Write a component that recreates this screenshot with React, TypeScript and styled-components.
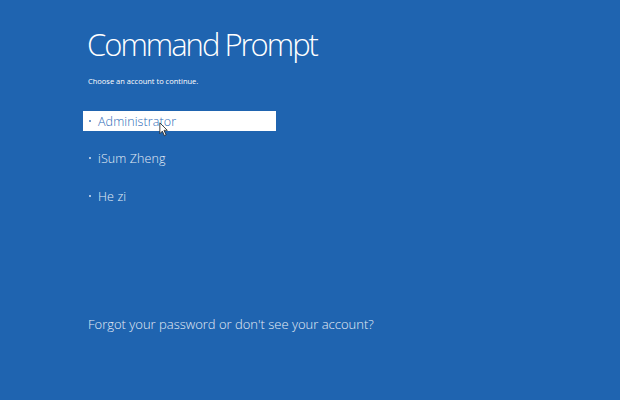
import React from 'react';
import styled, { createGlobalStyle } from 'styled-components';

const GlobalStyle = createGlobalStyle`
	html, body {
		margin: 0;
		padding: 0;
		background: #1f64b0;
	}
	body {
		font-family: "Open Sans", "Liberation Sans", sans-serif;
	}
`;

const accounts = ['Administrator', 'iSum Zheng', 'He zi'];

const App: React.FC = () => {
	return (
		<Main>
			<GlobalStyle />
			<Title>Command Prompt</Title>
			<Subtitle>Choose an account to continue.</Subtitle>
			<AccountList>
				{accounts.map((name, i) => (
					<Account key={name} selected={i === 0}>
						<Bullet selected={i === 0} />
						{name}
						{i === 0 && (
							<Cursor viewBox="0 0 12 18" width="10" height="15">
								<path d="M1 1 L1 14 L4 11 L6.5 16.5 L8.5 15.5 L6 10 L10 10 Z" fill="#fff" stroke="#222" strokeWidth="1" />
							</Cursor>
						)}
					</Account>
				))}
			</AccountList>
			<Forgot>Forgot your password or don't see your account?</Forgot>
		</Main>
	);
};

export default App;

const Main = styled.div`
	width: 620px;
	height: 400px;
	box-sizing: border-box;
	padding: 24px 0 0 83px;
	background: #1f64b0;
	color: #fff;
	display: flex;
	flex-direction: column;
`;

const Title = styled.h1`
	margin: 0 0 0 4px;
	font-size: 31px;
	font-weight: 300;
	line-height: 40px;
	letter-spacing: -2px;
`;

const Subtitle = styled.div`
	margin: 12px 0 0 5px;
	font-size: 7.5px;
	line-height: 10px;
`;

const AccountList = styled.div`
	display: flex;
	flex-direction: column;
	gap: 17.5px;
	margin-top: 25px;
`;

const Account = styled.div<{ selected: boolean }>`
	position: relative;
	width: 193px;
	height: 20px;
	display: flex;
	align-items: center;
	padding-left: 6px;
	box-sizing: border-box;
	font-size: 12.5px;
	font-weight: 300;
	letter-spacing: 0.1px;
	background: ${p => (p.selected ? '#fff' : 'transparent')};
	color: ${p => (p.selected ? '#2d6bb7' : '#e4ecf6')};
`;

const Bullet = styled.span<{ selected: boolean }>`
	width: 2px;
	height: 2px;
	margin: 0 7px 1px 0;
	background: ${p => (p.selected ? '#6f9bd0' : '#a9c2e2')};
`;

const Cursor = styled.svg`
	position: absolute;
	left: 76px;
	top: 11px;
`;

const Forgot = styled.div`
	margin: auto 0 67px 5px;
	font-size: 13px;
	font-weight: 300;
	color: #e4ecf6;
`;
